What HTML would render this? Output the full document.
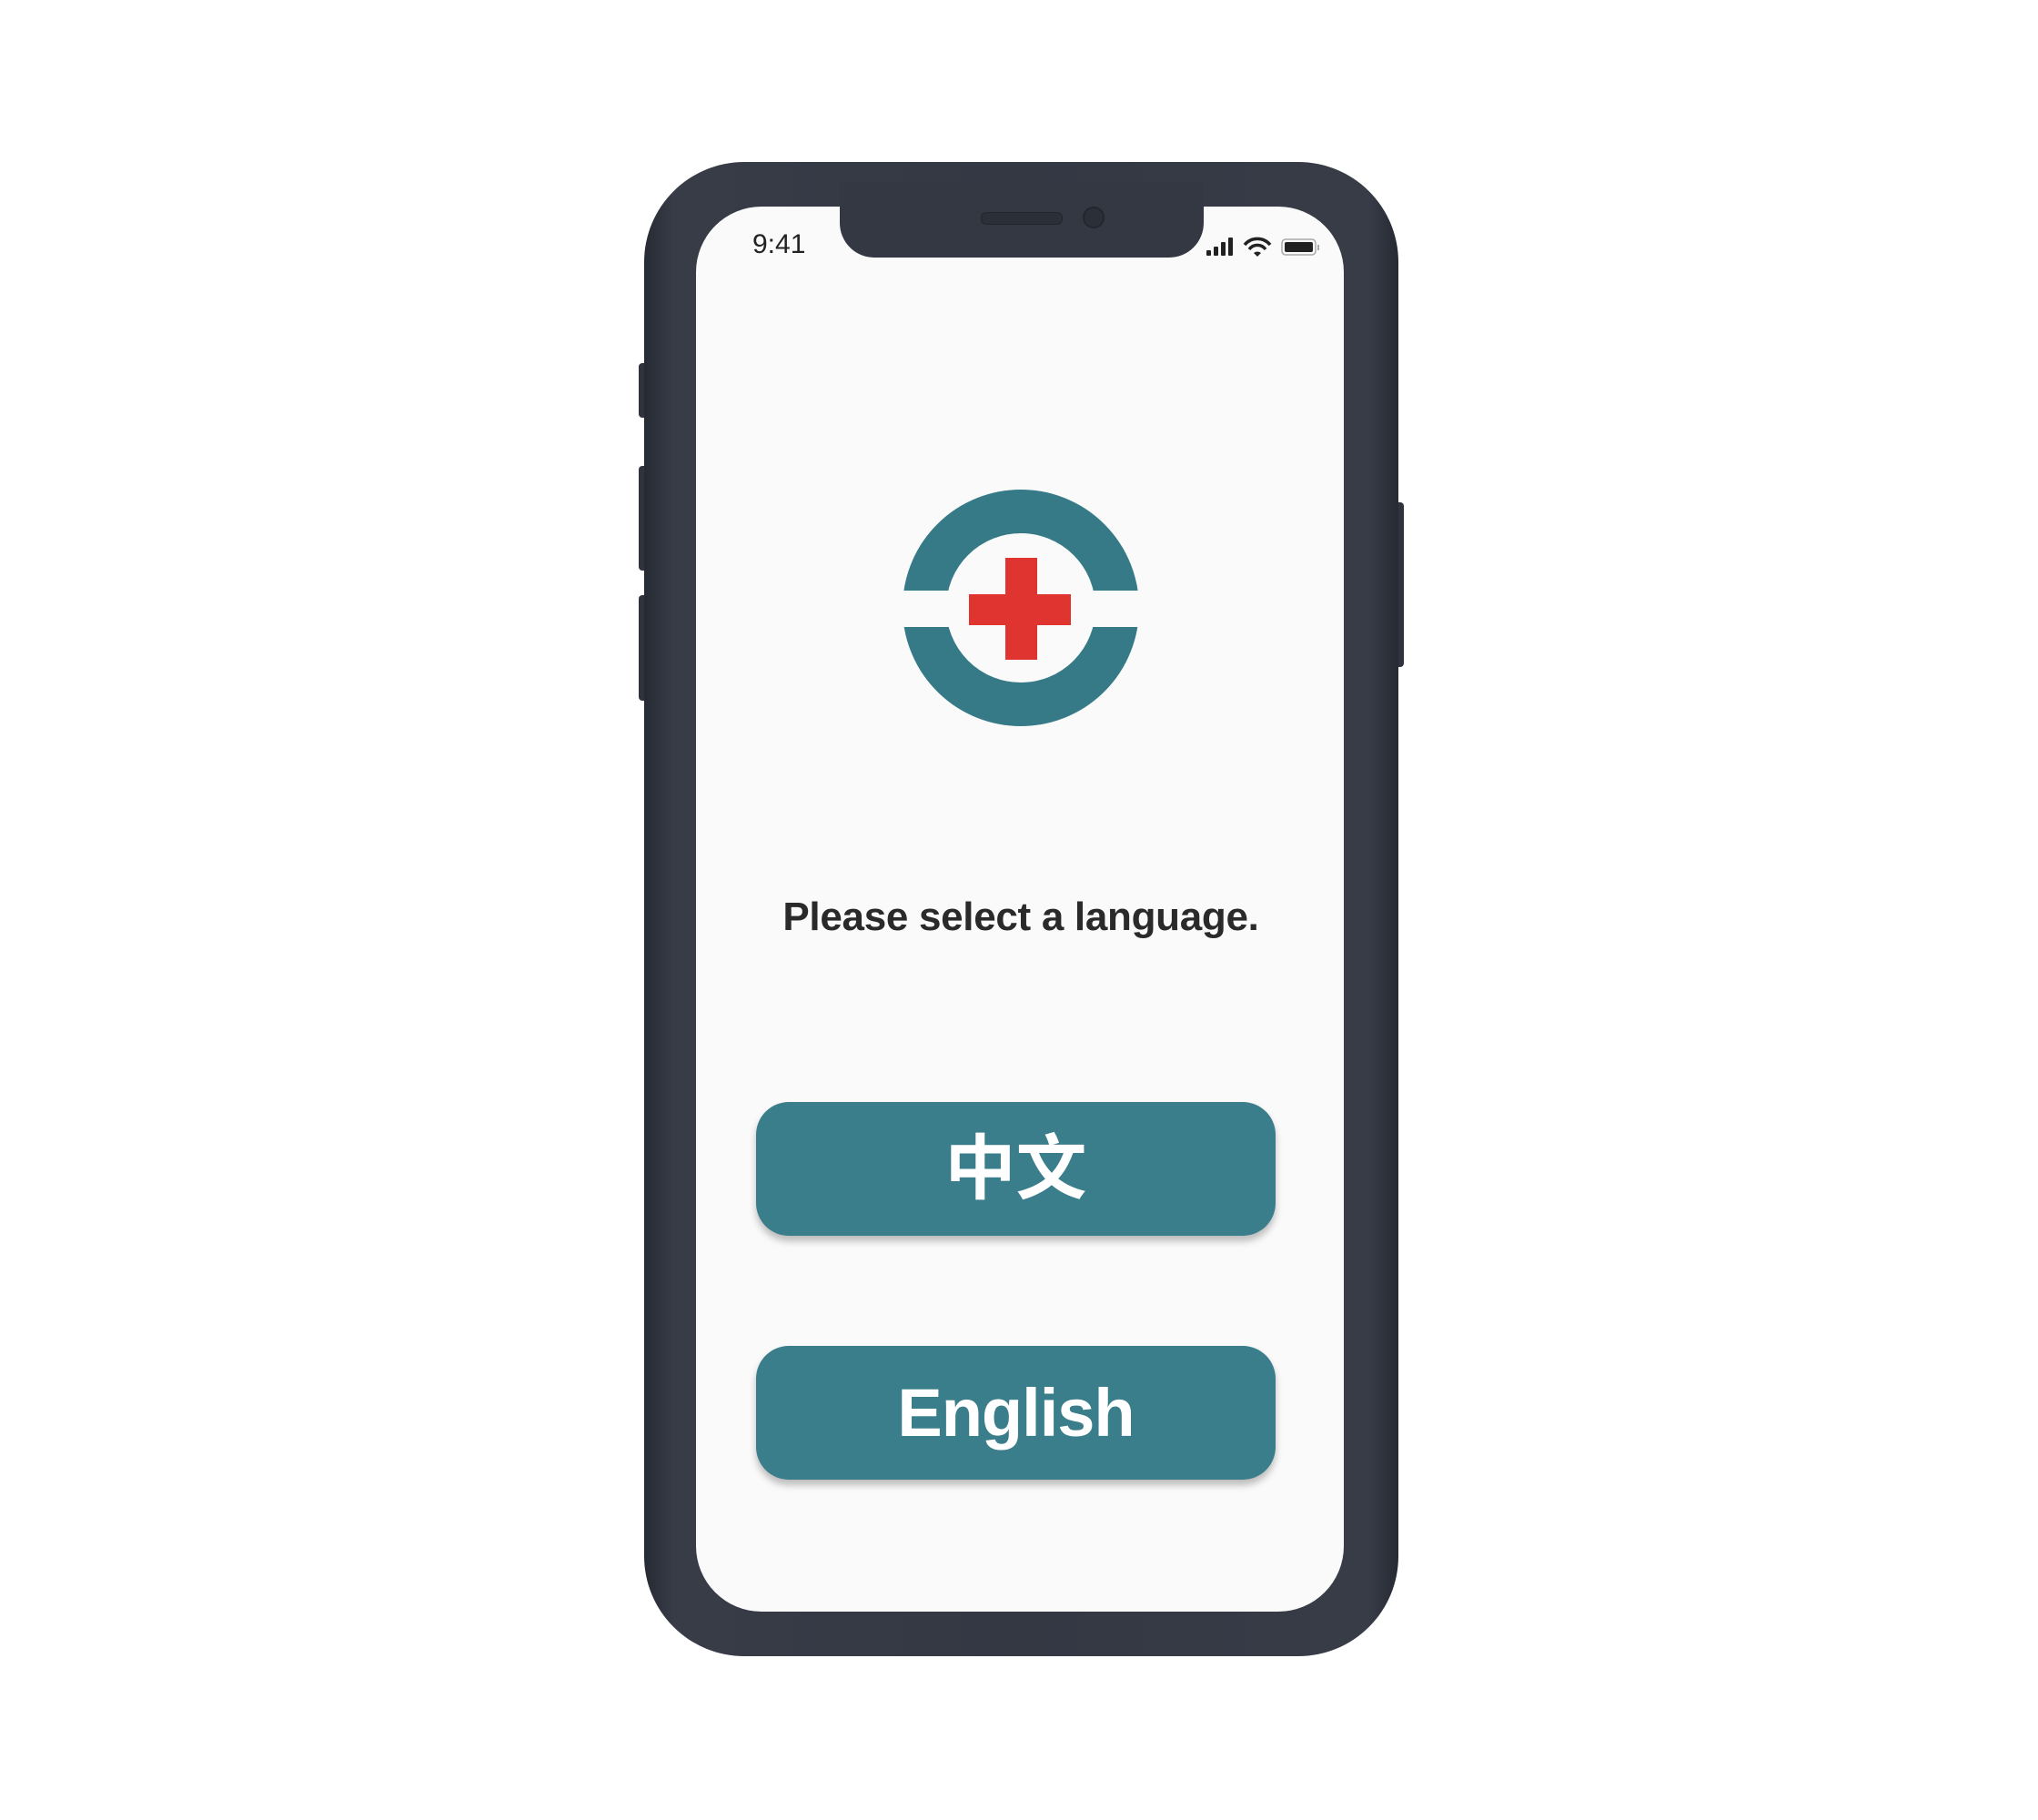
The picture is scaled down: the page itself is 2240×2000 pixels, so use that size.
<!DOCTYPE html>
<html><head><meta charset="utf-8"><style>
html,body{margin:0;padding:0;background:#fff;}
body{width:2240px;height:2000px;position:relative;overflow:hidden;font-family:"Liberation Sans","Noto Sans CJK SC",sans-serif;}
.phone{position:absolute;left:708px;top:178px;width:829px;height:1642px;border-radius:110px;background:linear-gradient(90deg,#262a33 0%,#383c47 4%,#343843 50%,#383c47 96%,#262a33 100%);}
.btn-side{position:absolute;background:#2f333d;border-radius:4px;}
.screen{position:absolute;left:765px;top:227px;width:712px;height:1544px;background:#fafafa;border-radius:72px;overflow:hidden;}
.notch{position:absolute;left:923px;top:200px;width:400px;height:83px;background:#343843;border-radius:0 0 38px 38px;}
.speaker{position:absolute;left:1078px;top:233px;width:88px;height:12px;border-radius:6px;background:#2b2f38;border:1px solid #23262e;}
.cam{position:absolute;left:1190px;top:227px;width:24px;height:24px;border-radius:50%;background:#2b2f38;border:2px solid #23262e;box-sizing:border-box;}
.time{position:absolute;left:827px;top:252px;font-size:30px;color:#222;}
.title{position:absolute;left:763px;width:718px;top:983px;text-align:center;font-size:44px;font-weight:bold;color:#2a2a2a;letter-spacing:-0.3px;}
.lb{position:absolute;left:831px;width:571px;height:147px;border-radius:36px;background:#3a7d8b;box-shadow:0 6px 8px rgba(0,0,0,0.25);color:#fff;text-align:center;font-weight:bold;}
</style></head><body>
<div class="btn-side" style="left:702px;top:399px;width:10px;height:60px"></div>
<div class="btn-side" style="left:702px;top:512px;width:10px;height:115px"></div>
<div class="btn-side" style="left:702px;top:654px;width:10px;height:116px"></div>
<div class="btn-side" style="left:1533px;top:552px;width:10px;height:181px"></div>
<div class="phone"></div>
<div class="screen"></div>
<div class="notch"></div>
<div class="speaker"></div>
<div class="cam"></div>
<div class="time">9:41</div>
<svg style="position:absolute;left:1326px;top:260px" width="130" height="24" viewBox="0 0 130 24">
<rect x="0" y="15" width="5" height="6" rx="1" fill="#222"/>
<rect x="8" y="11" width="5" height="10" rx="1" fill="#222"/>
<rect x="16" y="6" width="5" height="15" rx="1" fill="#222"/>
<rect x="24" y="1" width="5" height="20" rx="1" fill="#222"/>
<path d="M42 9 A18 18 0 0 1 70 9" stroke="#222" stroke-width="3.5" fill="none"/>
<path d="M47 14 A11 11 0 0 1 65 14" stroke="#222" stroke-width="3.5" fill="none"/>
<path d="M52 18 L56 22 L60 18 A6 6 0 0 0 52 18Z" fill="#222"/>
<rect x="83" y="3" width="37" height="17" rx="4" fill="none" stroke="#aaa" stroke-width="1.5"/>
<rect x="86" y="6" width="31" height="11" rx="2" fill="#222"/>
<rect x="122" y="9" width="2" height="6" fill="#aaa"/>
</svg>
<svg style="position:absolute;left:982px;top:528px" width="280" height="280" viewBox="-10 -10 280 280">
<defs><mask id="m" maskUnits="userSpaceOnUse" x="-10" y="-10" width="280" height="280"><rect x="-10" y="-10" width="280" height="280" fill="#fff"/><rect x="-10" y="111" width="280" height="40" fill="#000"/></mask></defs>
<circle cx="130" cy="130" r="106" fill="none" stroke="#367a88" stroke-width="48" mask="url(#m)"/>
<rect x="73" y="115" width="112" height="34" fill="#e03430"/>
<rect x="113" y="75" width="35" height="112" fill="#e03430"/>
</svg>
<div class="title">Please select a language.</div>
<div class="lb" style="top:1211px;font-size:78px;line-height:147px;">中文</div>
<div class="lb" style="top:1479px;font-size:74px;line-height:147px;letter-spacing:-1px;">English</div>
</body></html>
